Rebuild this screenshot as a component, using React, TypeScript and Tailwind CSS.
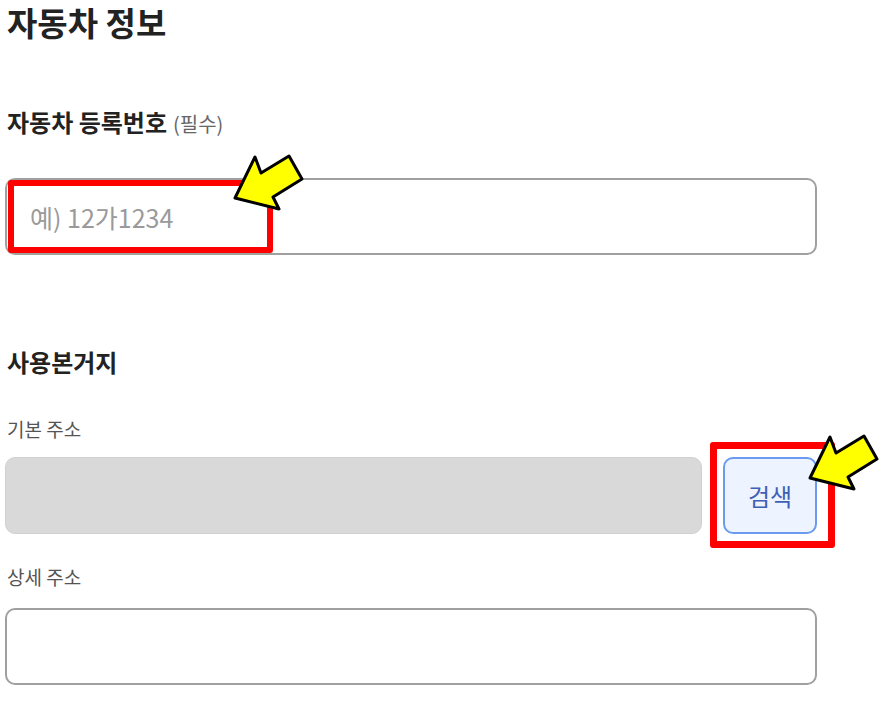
import React from "react";

export default function App() {
  const font = { fontFamily: '"Noto Sans CJK KR", "Noto Sans", sans-serif' };
  return (
    <div className="relative w-[884px] h-[706px] bg-white overflow-hidden" style={font}>
      <div className="w-[817px] pl-[5px] flex flex-col">
        <h1 className="pl-[2px] text-[33px] leading-[44px] font-bold text-[#222]">자동차 정보</h1>

        <div className="mt-[63px] pl-[2px] flex items-baseline gap-[6px] leading-[30px]">
          <span className="text-[24px] font-bold text-[#222]">자동차 등록번호</span>
          <span className="text-[20px] text-[#666]">(필수)</span>
        </div>

        <input
          className="mt-[39px] h-[77px] w-full rounded-[10px] border-2 border-[#a0a0a0] bg-white pl-[23px] text-[25px] text-[#333] placeholder:text-[#9a9a9a] outline-none"
          placeholder="예) 12가1234"
        />

        <h2 className="mt-[92px] pl-[2px] text-[24px] leading-[30px] font-bold text-[#222]">사용본거지</h2>

        <div className="mt-[39px] pl-[2px] text-[19px] leading-[26px] text-[#555]">기본 주소</div>

        <div className="mt-[15px] flex gap-[21px] h-[77px]">
          <div className="flex-1 rounded-[10px] bg-[#d9d9d9] border border-[#d0d0d0]" />
          <button className="w-[94px] h-[77px] rounded-[10px] border-2 border-[#6a9bf0] bg-[#edf3ff] text-[24px] text-[#3f5fb6]">
            검색
          </button>
        </div>

        <div className="mt-[30px] pl-[2px] text-[19px] leading-[26px] text-[#555]">상세 주소</div>

        <input className="mt-[18px] h-[77px] w-full rounded-[10px] border-2 border-[#a0a0a0] bg-white outline-none" />
      </div>

      <div className="absolute left-[8px] top-[180px] w-[265px] h-[73px] border-[6px] border-[#ff0000] rounded-[3px]" />
      <div className="absolute left-[710px] top-[442px] w-[125px] h-[106px] border-[7px] border-[#ff0000] rounded-[3px]" />

      <svg className="absolute left-0 top-0" width="884" height="706" viewBox="0 0 884 706">
        <polygon
          points="235,198 255,157 261,173 289,156 302,179 273,197 279,209"
          fill="#ffff00"
          stroke="#000"
          strokeWidth="3"
          strokeLinejoin="round"
        />
        <polygon
          points="810,478 830,437 836,453 864,436 877,459 848,477 854,489"
          fill="#ffff00"
          stroke="#000"
          strokeWidth="3"
          strokeLinejoin="round"
        />
      </svg>
    </div>
  );
}
